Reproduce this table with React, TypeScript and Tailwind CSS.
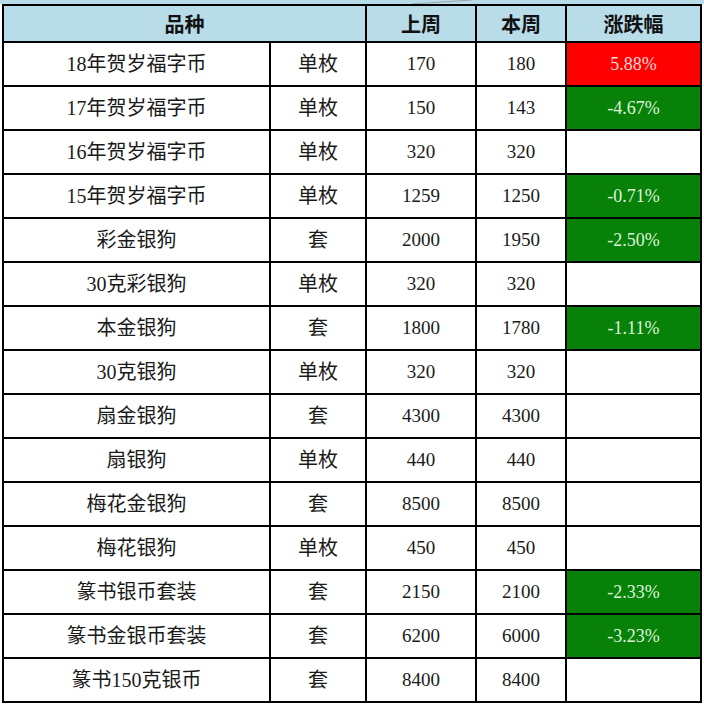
const rows: [string, string, string, string, string | null, "up" | "down" | null][] = [
  ["18年贺岁福字币", "单枚", "170", "180", "5.88%", "up"],
  ["17年贺岁福字币", "单枚", "150", "143", "-4.67%", "down"],
  ["16年贺岁福字币", "单枚", "320", "320", null, null],
  ["15年贺岁福字币", "单枚", "1259", "1250", "-0.71%", "down"],
  ["彩金银狗", "套", "2000", "1950", "-2.50%", "down"],
  ["30克彩银狗", "单枚", "320", "320", null, null],
  ["本金银狗", "套", "1800", "1780", "-1.11%", "down"],
  ["30克银狗", "单枚", "320", "320", null, null],
  ["扇金银狗", "套", "4300", "4300", null, null],
  ["扇银狗", "单枚", "440", "440", null, null],
  ["梅花金银狗", "套", "8500", "8500", null, null],
  ["梅花银狗", "单枚", "450", "450", null, null],
  ["篆书银币套装", "套", "2150", "2100", "-2.33%", "down"],
  ["篆书金银币套装", "套", "6200", "6000", "-3.23%", "down"],
  ["篆书150克银币", "套", "8400", "8400", null, null],
];

const serif = "font-['Liberation_Serif','Noto_Sans_CJK_SC',serif]";

export default function App() {
  return (
    <div className="w-[704px] h-[707px] bg-white overflow-hidden">
      <div className="h-[4px] bg-[#b8dce8] flex items-start">
        <svg width="60" height="4" className="ml-[412px]">
          <line x1="0" y1="4" x2="60" y2="0" stroke="#9aa5ab" strokeWidth="1" />
        </svg>
      </div>
      <div
        className={`ml-[2px] w-[700px] grid grid-cols-[265px_94px_108px_88px_133px] auto-rows-[42px] grid-rows-[35px] gap-[2px] p-[2px] bg-black ${serif}`}
      >
        <div className="col-span-2 bg-[#b8dce8] flex items-center justify-center text-[20px] font-bold text-[#111] font-['Noto_Sans_CJK_SC',sans-serif]">
          品种
        </div>
        <div className="bg-[#b8dce8] flex items-center justify-center text-[20px] font-bold text-[#111] font-['Noto_Sans_CJK_SC',sans-serif]">
          上周
        </div>
        <div className="bg-[#b8dce8] flex items-center justify-center text-[20px] font-bold text-[#111] font-['Noto_Sans_CJK_SC',sans-serif]">
          本周
        </div>
        <div className="bg-[#b8dce8] flex items-center justify-center text-[20px] font-bold text-[#111] font-['Noto_Sans_CJK_SC',sans-serif]">
          涨跌幅
        </div>
        {rows.map(([name, unit, last, cur, pct, dir]) => (
          <div key={name} className="contents">
            <div className="bg-white flex items-center justify-center text-[20px] text-[#1a1a1a]">{name}</div>
            <div className="bg-white flex items-center justify-center text-[20px] text-[#1a1a1a]">{unit}</div>
            <div className="bg-white flex items-center justify-center text-[19px] text-[#1a1a1a]">{last}</div>
            <div className="bg-white flex items-center justify-center text-[19px] text-[#1a1a1a]">{cur}</div>
            <div
              className={`flex items-center justify-center text-[18px] ${
                dir === "up"
                  ? "bg-[#ff0000] text-[#ffd6d6]"
                  : dir === "down"
                  ? "bg-[#078107] text-[#dcf5dc]"
                  : "bg-white"
              }`}
            >
              {pct}
            </div>
          </div>
        ))}
      </div>
    </div>
  );
}
